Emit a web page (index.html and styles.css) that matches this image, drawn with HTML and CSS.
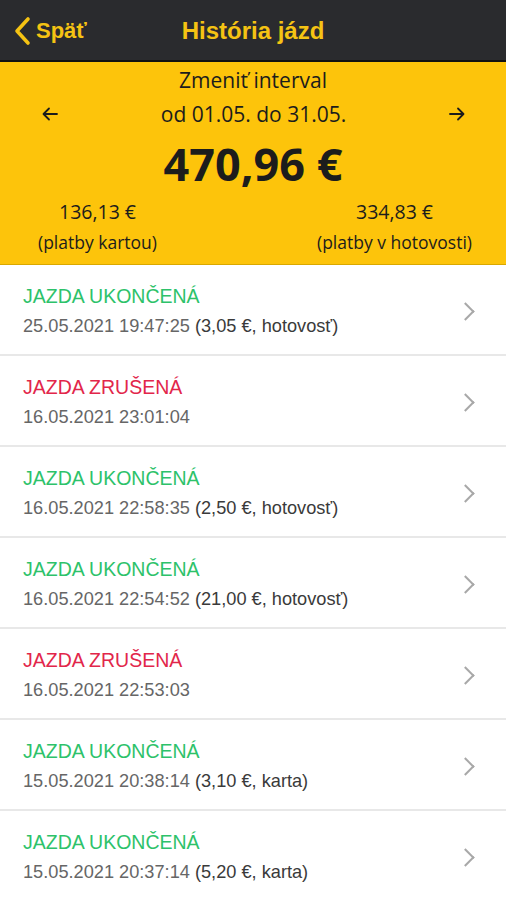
FILE: index.html
```html
<!DOCTYPE html>
<html lang="sk">
<head>
  <meta charset="UTF-8" />
  <meta name="viewport" content="width=device-width, initial-scale=1.0"/>
  <title>História jázd</title>
  <link rel="stylesheet" href="styles.css">
</head>
<body>
  <div class="topbar">
    <div class="back">
      <svg width="22" height="30" viewBox="0 0 22 30"><path d="M16 3 L5 15 L16 27" fill="none" stroke="#f5c313" stroke-width="3.6" stroke-linecap="round" stroke-linejoin="round"/></svg>
      <span>Späť</span>
    </div>
    <div class="title">História jázd</div>
  </div>

  <div class="summary">
    <div class="interval-label">Zmeniť interval</div>
    <div class="interval-row">
      <svg class="arrow" width="16" height="14" viewBox="0 0 16 14"><path d="M15 7 H2 M7 1.5 L1.5 7 L7 12.5" fill="none" stroke="#1c1c1c" stroke-width="1.8" stroke-linecap="round" stroke-linejoin="round"/></svg>
      <span class="range">od 01.05. do 31.05.</span>
      <svg class="arrow" width="16" height="14" viewBox="0 0 16 14"><path d="M1 7 H14 M9 1.5 L14.5 7 L9 12.5" fill="none" stroke="#1c1c1c" stroke-width="1.8" stroke-linecap="round" stroke-linejoin="round"/></svg>
    </div>
    <div class="total">470,96 €</div>
    <div class="split">
      <div class="part">
        <div class="amount">136,13 €</div>
        <div class="note">(platby kartou)</div>
      </div>
      <div class="part">
        <div class="amount">334,83 €</div>
        <div class="note">(platby v hotovosti)</div>
      </div>
    </div>
  </div>

  <ul class="rides">
    <li class="ride">
      <div><div class="state done">JAZDA UKONČENÁ</div><div class="info">25.05.2021 19:47:25 <b>(3,05 €, hotovosť)</b></div></div>
      <span class="chev"></span>
    </li>
    <li class="ride">
      <div><div class="state cancel">JAZDA ZRUŠENÁ</div><div class="info">16.05.2021 23:01:04</div></div>
      <span class="chev"></span>
    </li>
    <li class="ride">
      <div><div class="state done">JAZDA UKONČENÁ</div><div class="info">16.05.2021 22:58:35 <b>(2,50 €, hotovosť)</b></div></div>
      <span class="chev"></span>
    </li>
    <li class="ride">
      <div><div class="state done">JAZDA UKONČENÁ</div><div class="info">16.05.2021 22:54:52 <b>(21,00 €, hotovosť)</b></div></div>
      <span class="chev"></span>
    </li>
    <li class="ride">
      <div><div class="state cancel">JAZDA ZRUŠENÁ</div><div class="info">16.05.2021 22:53:03</div></div>
      <span class="chev"></span>
    </li>
    <li class="ride">
      <div><div class="state done">JAZDA UKONČENÁ</div><div class="info">15.05.2021 20:38:14 <b>(3,10 €, karta)</b></div></div>
      <span class="chev"></span>
    </li>
    <li class="ride">
      <div><div class="state done">JAZDA UKONČENÁ</div><div class="info">15.05.2021 20:37:14 <b>(5,20 €, karta)</b></div></div>
      <span class="chev"></span>
    </li>
  </ul>
</body>
</html>
```

FILE: styles.css
```css
body {
  margin: 0;
  font-family: "Liberation Sans", Arial, sans-serif;
  background: #fff;
  width: 506px;
  overflow: hidden;
}

.topbar {
  height: 62px;
  background: #2a2b2e;
  position: relative;
  display: flex;
  align-items: center;
  border-bottom: 2px solid #111;
  box-sizing: border-box;
  padding-top: 2px;
}

.back {
  display: flex;
  align-items: center;
  gap: 2px;
  padding-left: 12px;
  color: #f5c313;
  font-size: 22px;
  font-weight: bold;
}

.title {
  position: absolute;
  left: 0;
  right: 0;
  text-align: center;
  color: #f5c313;
  font-size: 24px;
  font-weight: bold;
  pointer-events: none;
}

.summary {
  background: #fdc40b;
  color: #1c1c1c;
  font-family: "Open Sans", sans-serif;
  padding-top: 3px;
  height: 203px;
  box-sizing: border-box;
  border-bottom: 1px solid #d9a800;
}

.interval-label {
  text-align: center;
  font-size: 21px;
  line-height: 30px;
}

.interval-row {
  display: flex;
  justify-content: space-between;
  align-items: center;
  padding: 0 41px 0 42px;
  font-size: 21px;
  line-height: 38px;
}

.total {
  text-align: center;
  font-size: 45px;
  font-weight: bold;
  line-height: 56px;
  margin-top: 3px;
}

.split {
  display: flex;
  justify-content: space-between;
  padding: 6px 34px 0 38px;
}

.part {
  text-align: center;
  font-size: 19.5px;
}

.amount {
  line-height: 28px;
}

.note {
  font-size: 17.5px;
  line-height: 32px;
}

.rides {
  list-style: none;
  margin: 0;
  padding: 0;
}

.ride {
  height: 91px;
  box-sizing: border-box;
  border-bottom: 2px solid #e8e8e8;
  display: flex;
  justify-content: space-between;
  align-items: center;
  padding: 5px 34px 0 23px;
}

.state {
  font-size: 19.5px;
  line-height: 29px;
  margin-top: -2px;
}

.done {
  color: #2dc26a;
}

.cancel {
  color: #e2264a;
}

.info {
  font-size: 18.2px;
  line-height: 30px;
  color: #666;
}

.info b {
  font-weight: normal;
  color: #3a3a3a;
}

.chev {
  width: 11px;
  height: 11px;
  border-top: 2px solid #a8a8a8;
  border-right: 2px solid #a8a8a8;
  transform: rotate(45deg);
  margin-top: -2px;
}
```
